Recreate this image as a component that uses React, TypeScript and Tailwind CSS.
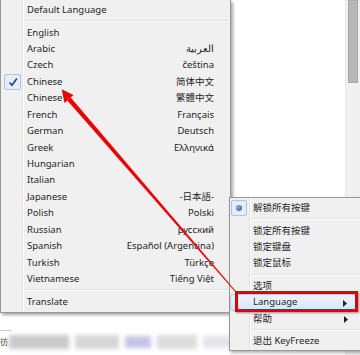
import React from 'react';

const languages: [string, string][] = [
    ['English', ''],
    ['Arabic', 'العربية'],
    ['Czech', 'čeština'],
    ['Chinese', '简体中文'],
    ['Chinese', '繁體中文'],
    ['French', 'Français'],
    ['German', 'Deutsch'],
    ['Greek', 'Ελληνικά'],
    ['Hungarian', ''],
    ['Italian', ''],
    ['Japanese', '-日本語-'],
    ['Polish', 'Polski'],
    ['Russian', 'русский'],
    ['Spanish', 'Español (Argentina)'],
    ['Turkish', 'Türkçe'],
    ['Vietnamese', 'Tiếng Việt'],
];

const font = { fontFamily: '"Noto Sans", "Noto Sans CJK SC", sans-serif' };

const Separator = ({ gutter }: { gutter: string }) => (
    <div className={`flex h-[6px] items-center ${gutter}`}>
        <div className="w-full border-t border-[#e0e0e0] border-b-white border-b" />
    </div>
);

const SubArrow = () => (
    <svg width="4" height="7" viewBox="0 0 4 7" className="absolute right-[9px] top-[5px]">
        <path d="M0 0 L4 3.5 L0 7 Z" fill="#222" />
    </svg>
);

const App = () => {
    return (
        <div className="relative w-[360px] h-[355px] overflow-hidden bg-white text-[9.5px] text-[#1e1e1e]" style={font}>
            {/* window behind the menus */}
            <div className="flex h-full">
                <div className="flex w-[233px] flex-col">
                    <div className="h-[330px]" />
                    <div className="h-px w-[12px] bg-[#cfcfcf]" />
                    <div className="mt-[2px] flex h-[17px] items-center">
                        <span className="text-[8px] text-[#333]">彷</span>
                        <div className="ml-[1px] flex h-full flex-1 items-center gap-[6px] blur-[2px]">
                            <div className="h-[14px] w-[60px] bg-[#c9c9c9]" />
                            <div className="h-[14px] w-[44px] bg-[#d6d6d6]" />
                            <div className="h-[12px] w-[26px] bg-[#c6c3e6]" />
                            <div className="h-[14px] w-[40px] bg-[#dcdcdc]" />
                            <div className="h-[12px] w-[34px] bg-[#e4e4ec]" />
                        </div>
                    </div>
                </div>
                <div className="flex-1 bg-white" />
                <div className="w-[15px] border-l border-[#e6e6e6] bg-[#f0f0f0] pl-[2px]">
                    <div className="h-[83px] w-[10px] border border-[#a9a9a9] bg-[#b7b7b7]" />
                </div>
            </div>

            {/* language submenu */}
            <div className="absolute left-0 top-0 w-[231px] border-l border-r border-b border-[#979797] bg-[#f0f0f0] pt-[2px] pb-[2px] shadow-[2px_2px_3px_rgba(0,0,0,0.35)]">
                <div className="absolute left-[21px] top-0 bottom-0 w-[2px] border-l border-[#e2e2e2] border-r border-r-white" />
                <div className="flex h-[16.45px] items-center pl-[26px]">Default Language</div>
                <Separator gutter="pl-[23px]" />
                {languages.map(([name, local], i) => (
                    <div key={i} className="relative flex h-[16.45px] items-center pl-[26px] pr-[16px]">
                        {i === 3 && (
                            <div className="absolute left-[3px] top-0 flex h-[16px] w-[17px] items-center justify-center rounded-[2px] border border-[#a8c6ec] bg-[#e4edf9]">
                                <svg width="10" height="10" viewBox="0 0 10 10">
                                    <path d="M1.5 5.5 L4 8.2 L8.8 1.5" fill="none" stroke="#1d3c74" strokeWidth="1.5" />
                                </svg>
                            </div>
                        )}
                        <span className="flex-1">{name}</span>
                        <span>{local}</span>
                    </div>
                ))}
                <Separator gutter="pl-[23px]" />
                <div className="flex h-[16.45px] items-center pl-[26px]">Translate</div>
            </div>

            {/* tray context menu */}
            <div className="absolute left-[229px] top-[197px] w-[140px] border border-[#979797] bg-[#f0f0f0] pt-[2px] shadow-[2px_2px_3px_rgba(0,0,0,0.3)]">
                <div className="absolute left-[19px] top-0 bottom-0 w-[2px] border-l border-[#e2e2e2] border-r border-r-white" />
                <div className="relative flex h-[16.45px] items-center pl-[23px]">
                    <div className="absolute left-[1px] top-0 flex h-[16px] w-[16px] items-center justify-center rounded-[2px] border border-[#a8c6ec] bg-[#e4edf9]">
                        <div className="h-[6px] w-[6px] rounded-full bg-[radial-gradient(circle_at_35%_35%,#9aa4e0,#3a46a0)]" />
                    </div>
                    解锁所有按键
                </div>
                <Separator gutter="pl-[21px]" />
                <div className="flex h-[16.45px] items-center pl-[23px]">锁定所有按键</div>
                <div className="flex h-[16.45px] items-center pl-[23px]">锁定键盘</div>
                <div className="flex h-[16.45px] items-center pl-[23px]">锁定鼠标</div>
                <Separator gutter="pl-[21px]" />
                <div className="flex h-[16.45px] items-center pl-[23px]">选项</div>
                <div className="relative flex h-[16.45px] w-[127px] items-center rounded-[3px] border border-[#aecbee] bg-gradient-to-b from-[#eef4fd] to-[#d7e5f8] pl-[22px]">
                    Language
                    <SubArrow />
                </div>
                <div className="relative flex h-[16.45px] w-[127px] items-center pl-[23px]">
                    帮助
                    <SubArrow />
                </div>
                <Separator gutter="pl-[21px]" />
                <div className="flex h-[16.45px] items-center pl-[23px]">退出 KeyFreeze</div>
            </div>

            {/* red annotation */}
            <div className="absolute left-[235px] top-[291px] h-[21px] w-[123px] border-[3px] border-[#e60000] shadow-[1px_1px_2px_rgba(0,0,0,0.4)]" />
            <svg className="pointer-events-none absolute left-0 top-0" width="360" height="355" viewBox="0 0 360 355">
                <polygon points="67.3,100.4 70.7,97.6 236.4,291.7 235.6,292.3" fill="#f00000" />
                <polygon points="61.7,89.3 73.5,95.1 64.5,102.9" fill="#f00000" />
            </svg>
        </div>
    );
};

export default App;
